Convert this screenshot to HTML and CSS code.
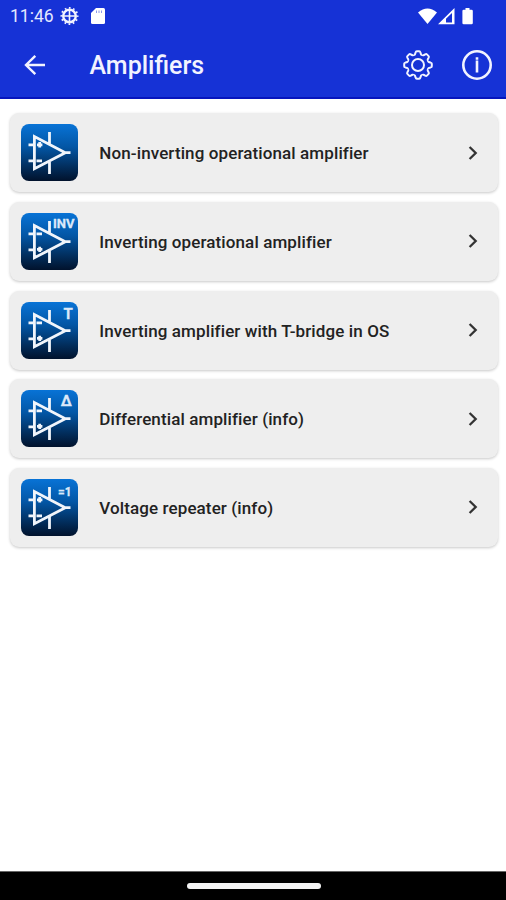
FILE: index.html
```html
<!DOCTYPE html>
<html lang="en">
<head>
<meta charset="utf-8">
<title>Amplifiers</title>
<link rel="stylesheet" href="styles.css">
</head>
<body>
<svg class="defs" width="0" height="0" aria-hidden="true">
  <defs>
    <path id="tooth" d="M-4.25-10.25C-3.2-9.9-2.8-10.8-2.4-12.6Q-2.1-13.8-1.2-13.8H1.2Q2.1-13.8 2.4-12.6C2.8-10.8 3.2-9.9 4.25-10.25"/>
    <g id="opamp">
      <path d="M13.4 12.6V44.8L44.3 28.7ZM44 28.7H49.5M28.5 8V20M28.5 37.5V50M7.5 20.8H13M7.5 36.8H13"/>
    </g>
    <path id="plus-top" d="M16 20.8H21.4M18.7 18.1V23.5M15.5 36.8H21"/>
    <path id="plus-bottom" d="M15.5 20.8H21M16 36.4H21.4M18.7 33.7V39.1"/>
  </defs>
</svg>
<header class="top">
  <div class="status">
    <span class="time">11:46</span>
    <svg class="debug" width="19" height="20" viewBox="-9.5 -10 19 20">
      <circle r="6.3" stroke-width="2.4"/>
      <path d="M-6 0H6M0-6V6" stroke-width="1.6"/>
      <circle r="8.1" stroke-width="1.8" stroke-dasharray="1.7 2.54" stroke-dashoffset=".85"/>
    </svg>
    <svg class="sd" width="14" height="16" viewBox="0 0 14 16"><path d="M5 0H12.5Q14 0 14 1.5V14.5Q14 16 12.5 16H1.5Q0 16 0 14.5V5Z"/><path class="slots" d="M5.5 2.5V5M8 2.5V5M10.5 2.5V5"/></svg>
    <svg class="signals" width="56" height="17" viewBox="0 0 56 17">
      <path d="M0 4.4Q9.5-3.2 19 4.4L9.5 16Z"/>
      <path fill-rule="evenodd" d="M20 16.3L36.5 0V16.3ZM28 10.8V14.5H34V5Z"/>
      <path d="M47.5 0H51.5V1.7H53.5Q54.8 1.7 54.8 3V15Q54.8 16.3 53.5 16.3H45.7Q44.4 16.3 44.4 15V3Q44.4 1.7 45.7 1.7H47.5Z"/>
    </svg>
  </div>
  <div class="bar">
    <svg class="back" width="22" height="22" viewBox="0 0 22 22"><path d="M11.3 1.8L2 11L11.3 20.2M2 11H21"/></svg>
    <h1>Amplifiers</h1>
    <svg class="gear" width="32" height="32" viewBox="-16 -16 32 32">
      <use href="#tooth"/><use href="#tooth" transform="rotate(45)"/><use href="#tooth" transform="rotate(90)"/><use href="#tooth" transform="rotate(135)"/><use href="#tooth" transform="rotate(180)"/><use href="#tooth" transform="rotate(225)"/><use href="#tooth" transform="rotate(270)"/><use href="#tooth" transform="rotate(315)"/>
      <circle r="6"/>
    </svg>
    <svg class="info" width="32" height="32" viewBox="-16 -16 32 32"><circle r="13.7"/><path d="M0-7.7V-5.2M0-4.6V7.5"/></svg>
  </div>
</header>
<main class="list">
  <a class="card">
    <svg class="icon" viewBox="0 0 57 57"><use href="#opamp"/><use href="#plus-top"/></svg>
    <span class="label">Non-inverting operational amplifier</span>
    <svg class="chevron" viewBox="0 0 10 16"><path d="M1.6 2L7.7 8L1.6 14"/></svg>
  </a>
  <a class="card">
    <svg class="icon" viewBox="0 0 57 57"><use href="#opamp"/><use href="#plus-bottom"/><text x="32" y="15.3" textLength="21.5" lengthAdjust="spacingAndGlyphs">INV</text></svg>
    <span class="label">Inverting operational amplifier</span>
    <svg class="chevron" viewBox="0 0 10 16"><path d="M1.6 2L7.7 8L1.6 14"/></svg>
  </a>
  <a class="card">
    <svg class="icon" viewBox="0 0 57 57"><use href="#opamp"/><use href="#plus-bottom"/><text class="big" x="42.5" y="16.5">T</text></svg>
    <span class="label">Inverting amplifier with T-bridge in OS</span>
    <svg class="chevron" viewBox="0 0 10 16"><path d="M1.6 2L7.7 8L1.6 14"/></svg>
  </a>
  <a class="card">
    <svg class="icon" viewBox="0 0 57 57"><use href="#opamp"/><use href="#plus-bottom"/><text class="big" x="39.8" y="16">Δ</text></svg>
    <span class="label">Differential amplifier (info)</span>
    <svg class="chevron" viewBox="0 0 10 16"><path d="M1.6 2L7.7 8L1.6 14"/></svg>
  </a>
  <a class="card">
    <svg class="icon" viewBox="0 0 57 57"><use href="#opamp"/><use href="#plus-top"/><text x="37" y="16.8" textLength="13.5" lengthAdjust="spacingAndGlyphs">=1</text></svg>
    <span class="label">Voltage repeater (info)</span>
    <svg class="chevron" viewBox="0 0 10 16"><path d="M1.6 2L7.7 8L1.6 14"/></svg>
  </a>
</main>
<footer class="nav"><div class="handle"></div></footer>
</body>
</html>
```
FILE: styles.css
```css
* { box-sizing: border-box; }
body {
  margin: 0;
  height: 900px;
  display: flex;
  flex-direction: column;
  background: #fff;
  font-family: Roboto, "Liberation Sans", sans-serif;
  overflow: hidden;
}
svg { display: block; flex: none; }
.defs { position: absolute; }
.top {
  height: 99px;
  flex: none;
  background: #1632d6;
  border-bottom: 2px solid #0715bd;
  color: #f2f3ff;
}
.status { height: 32px; display: flex; align-items: center; padding: 0 32px 0 10px; }
.time { width: 50px; font-size: 17.5px; color: #e4e8ff; }
.debug { fill: none; stroke: #f2f3ff; }
.sd { margin-left: 12px; fill: #fff; }
.slots { stroke: #8c98e8; stroke-width: 1; }
.signals { margin-left: auto; fill: #fff; }
.bar { height: 66px; display: flex; align-items: center; padding: 0 13px 0 24px; }
.back, .gear, .info { fill: none; stroke: #f2f3ff; stroke-width: 2.4; }
.gear { margin-left: auto; stroke-width: 2; }
.info { margin-left: 27px; stroke-width: 2.6; }
h1 { margin: 2px 0 0 43.5px; font-size: 25px; line-height: 30px; font-weight: 500; }
.list { flex: 1; display: flex; flex-direction: column; gap: 9.6px; padding: 14.4px 8px 0 10px; }
.card {
  height: 79px;
  display: flex;
  align-items: center;
  padding: 0 20.5px 0 11.3px;
  border-radius: 9px;
  background: #eee;
  box-shadow: 0 1px 3px rgba(0, 0, 0, .22);
}
.icon {
  width: 57px;
  height: 57px;
  border-radius: 8px;
  background: linear-gradient(#0873d6, #0356a5 40%, #022e5d 75%, #01122c);
  fill: none;
  stroke: #f1f5fb;
  stroke-width: 2.8;
}
.icon text { fill: #dce8f9; stroke: #dce8f9; stroke-width: .3; font-size: 12.5px; font-weight: 700; }
.icon .big { font-size: 15px; }
.label { margin: 1px 0 0 21px; font-size: 17px; line-height: 22px; font-weight: 500; letter-spacing: .11px; color: #222; white-space: nowrap; }
.chevron { width: 10px; height: 16px; margin-left: auto; fill: none; stroke: #333; stroke-width: 2.3; }
.nav { height: 29px; flex: none; background: #000; border-top: 1px solid #666; display: flex; justify-content: center; padding-top: 11px; }
.handle { width: 134px; height: 6px; margin-left: 1px; border-radius: 3px; background: #f4f4f4; }
```
